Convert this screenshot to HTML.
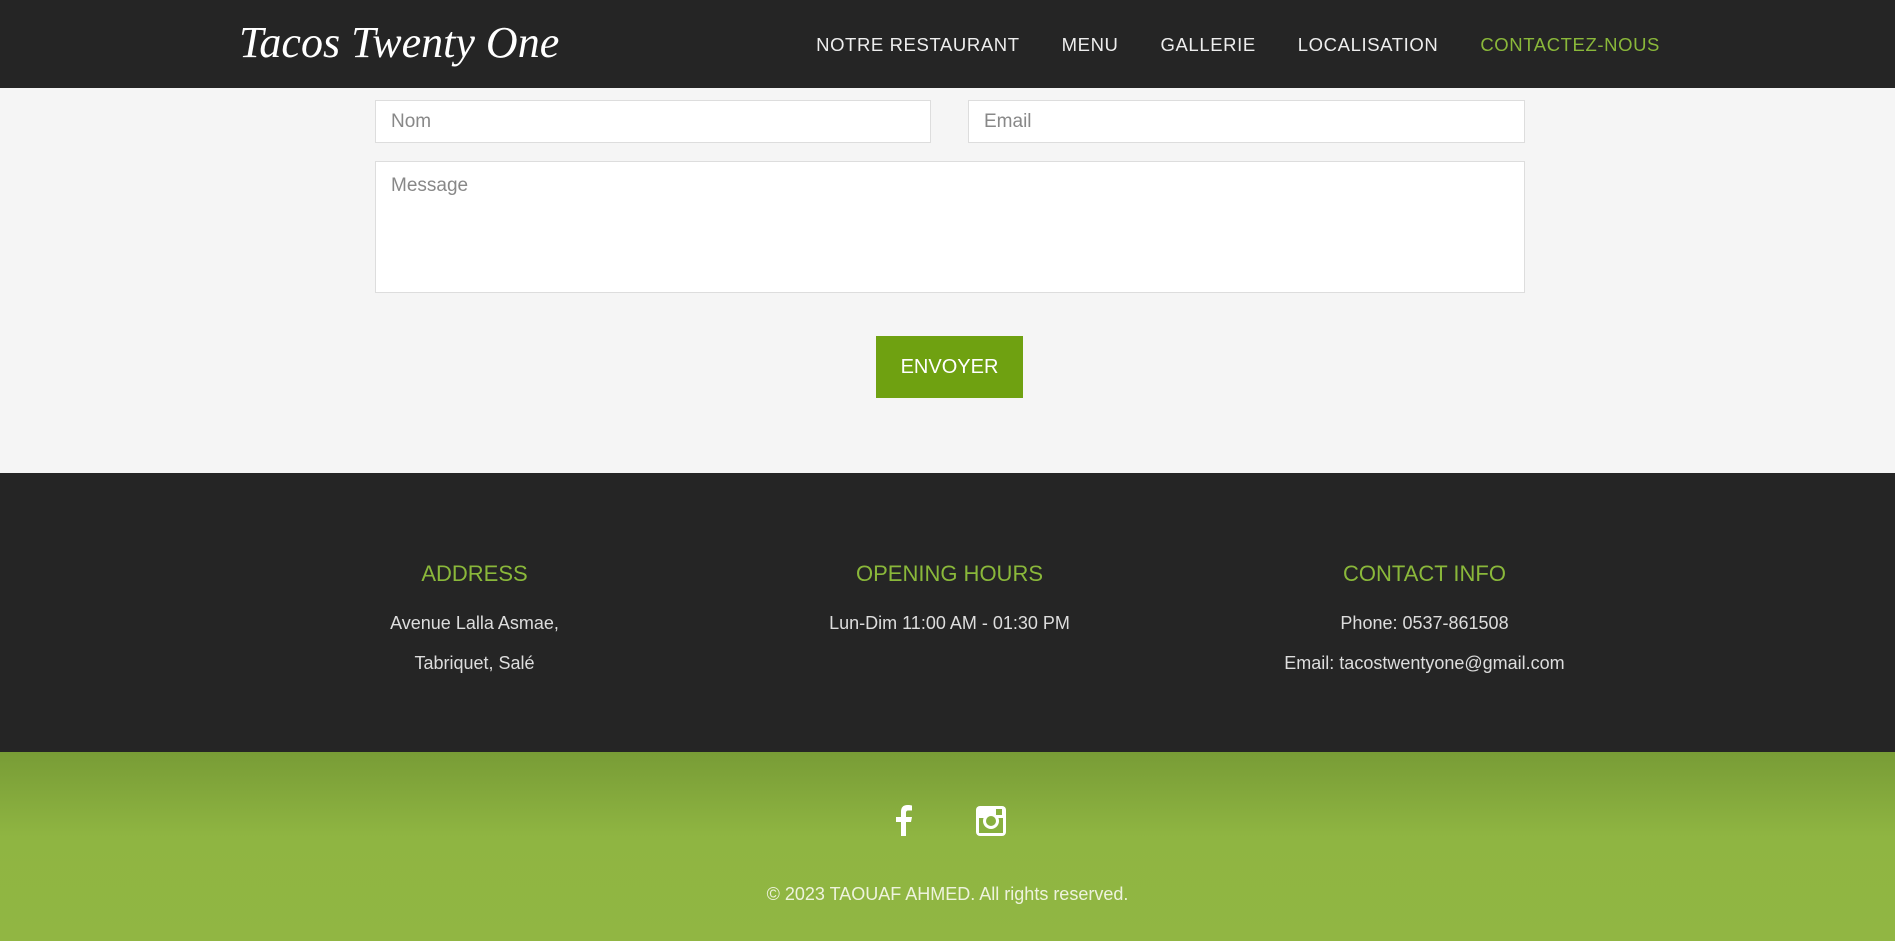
<!DOCTYPE html>
<html><head><meta charset="utf-8"><style>
*{margin:0;padding:0;box-sizing:border-box}
body{width:1895px;height:941px;overflow:hidden;font-family:"Liberation Sans",sans-serif;background:#f5f5f5}
header{height:88px;background:#252525;position:relative}
.logo{position:absolute;left:239px;top:17px;color:#fff;font-family:"Liberation Serif",serif;font-style:italic;font-size:44px}
nav{position:absolute;top:34px;right:235px;display:flex;gap:42px;font-size:18.5px;color:#eee;letter-spacing:.6px}
nav .a{color:#8ab83a}
.in{position:absolute;background:#fff;border:1px solid #ddd;color:#888;font-size:19px;padding:10px 15px}
.btn{position:absolute;left:876px;top:336px;width:147px;height:62px;background:#6fa111;color:#fff;font-size:20px;text-align:center;line-height:62px}
.dark{position:absolute;top:473px;left:0;width:1895px;height:279px;background:#252525}
.col{position:absolute;width:475px;text-align:center;color:#ddd;font-size:18px}
.col h3{color:#8ab83a;font-weight:normal;font-size:22px;margin-top:88px;margin-bottom:16px}
.col p{line-height:40px}
.green{position:absolute;top:752px;left:0;width:1895px;height:189px;background:linear-gradient(#789c36,#8fb542 45%,#91b643)}
.copy{position:absolute;top:132px;width:100%;text-align:center;color:#eef3dd;font-size:18px}
</style></head><body>
<header><div class="logo">Tacos Twenty One</div>
<nav><span>NOTRE RESTAURANT</span><span>MENU</span><span>GALLERIE</span><span>LOCALISATION</span><span class="a">CONTACTEZ-NOUS</span></nav></header>
<div class="in" style="left:375px;top:100px;width:556px;height:43px">Nom</div>
<div class="in" style="left:968px;top:100px;width:557px;height:43px">Email</div>
<div class="in" style="left:375px;top:161px;width:1150px;height:132px;padding-top:13px">Message</div>
<div class="btn">ENVOYER</div>
<div class="dark">
<div class="col" style="left:237px"><h3>ADDRESS</h3><p>Avenue Lalla Asmae,</p><p>Tabriquet, Salé</p></div>
<div class="col" style="left:712px"><h3>OPENING HOURS</h3><p>Lun-Dim 11:00 AM - 01:30 PM</p></div>
<div class="col" style="left:1187px"><h3>CONTACT INFO</h3><p>Phone: 0537-861508</p><p>Email: tacostwentyone@gmail.com</p></div>
</div>
<div class="green">
<svg style="position:absolute;left:893px;top:52px" width="20" height="32" viewBox="0 0 20 32"><path d="M13 32V18h5l1-5h-6V9c0-1.5.5-2.5 2.5-2.5H19V1.5C18 1.3 16.5 1 14.5 1 10 1 8 3.5 8 8v5H3v5h5v14z" fill="#fff"/></svg>
<svg style="position:absolute;left:976px;top:54px" width="30" height="30" viewBox="0 0 30 30"><rect x="0" y="0" width="30" height="30" rx="4" fill="#fff"/><rect x="3" y="12" width="24" height="15" fill="#88b03f"/><circle cx="15" cy="15" r="8" fill="#fff"/><circle cx="15" cy="15" r="5" fill="#88b03f"/><rect x="20" y="3" width="6" height="6" fill="#88b03f"/></svg>
<div class="copy">© 2023 TAOUAF AHMED. All rights reserved.</div>
</div>
</body></html>
